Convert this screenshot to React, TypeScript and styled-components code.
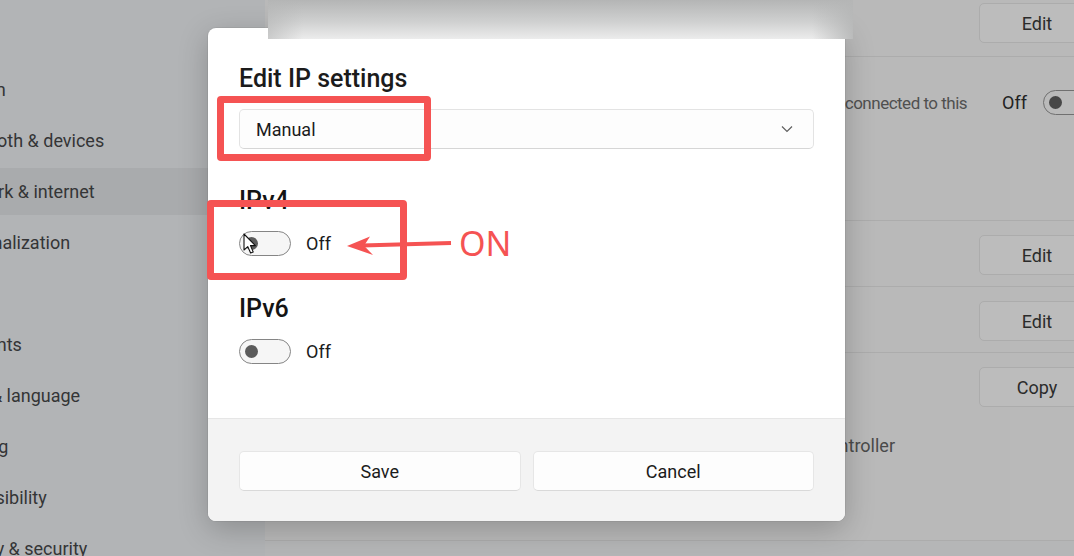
import React from "react";
import styled, { createGlobalStyle } from "styled-components";

const GlobalStyle = createGlobalStyle`
  html, body { margin: 0; padding: 0; }
  body { font-family: Roboto, "Noto Sans", "Liberation Sans", sans-serif; }
  * { box-sizing: border-box; }
`;

const Page = styled.div`
  position: relative;
  width: 1074px;
  height: 556px;
  overflow: hidden;
  display: grid;
  grid-template-columns: 265px 846px;
  background: #b5b6b7;
`;

const Sidebar = styled.nav`
  background: #b2b4b6;
  padding-top: 66px;
  display: flex;
  flex-direction: column;
  gap: 4px;
`;

const NavItem = styled.div<{ $active?: boolean }>`
  height: 47px;
  margin-left: -54px;
  display: flex;
  align-items: center;
  font-size: 18px;
  color: #343536;
  white-space: nowrap;
  border-radius: 4px;
  background: ${(p) => (p.$active ? "#a9abad" : "transparent")};
`;

const Main = styled.main`
  display: flex;
  flex-direction: column;
`;

const Card = styled.section<{ $h: number; $pt: number }>`
  height: ${(p) => p.$h}px;
  padding: ${(p) => p.$pt}px 16px 0 0;
  background: #b9b9b9;
  border-bottom: 1px solid #acacac;
  display: flex;
  flex-direction: column;
`;

const ActionRow = styled.div`
  display: flex;
  justify-content: flex-end;
  align-items: flex-start;
`;

const BgButton = styled.div`
  width: 116px;
  height: 40px;
  border-radius: 5px;
  background: #bcbcbc;
  border: 1px solid #acacac;
  display: flex;
  align-items: center;
  justify-content: center;
  font-size: 18px;
  color: #2b2b2b;
`;

const Desc = styled.div`
  font-size: 17px;
  letter-spacing: -0.5px;
  line-height: 24px;
  color: #505050;
  white-space: pre;
  margin-right: 35px;
`;

const BgOff = styled.div`
  font-size: 18px;
  line-height: 24px;
  color: #222;
  margin-right: 16px;
`;

const Toggle = styled.div<{ $dim?: boolean }>`
  position: relative;
  flex: none;
  width: 52px;
  height: 25px;
  border-radius: 13px;
  border: 1.5px solid ${(p) => (p.$dim ? "#707070" : "#858585")};
  background: ${(p) => (p.$dim ? "#bababa" : "#f6f6f6")};
  &::after {
    content: "";
    position: absolute;
    left: 4.5px;
    top: 4.5px;
    width: 13px;
    height: 13px;
    border-radius: 50%;
    background: ${(p) => (p.$dim ? "#474747" : "#5c5c5c")};
  }
`;

const PropList = styled.div`
  margin-top: 28px;
  margin-right: 200px;
  text-align: right;
  font-size: 18px;
  line-height: 22px;
  color: #4a4a4a;
  white-space: nowrap;
`;

const Dialog = styled.div`
  position: absolute;
  left: 208px;
  top: 28px;
  width: 637px;
  height: 493px;
  border-radius: 8px;
  background: #ffffff;
  box-shadow: 0 8px 30px rgba(0, 0, 0, 0.22), 0 0 0 1px rgba(0, 0, 0, 0.05);
  display: flex;
  flex-direction: column;
  overflow: hidden;
`;

const Body = styled.div`
  flex: 1;
  padding: 35px 31px 0 31px;
  display: flex;
  flex-direction: column;
`;

const Title = styled.h2`
  margin: 0;
  font-size: 25px;
  line-height: 32px;
  font-weight: 500;
  color: #1b1b1b;
`;

const Select = styled.div`
  margin-top: 14px;
  height: 40px;
  border-radius: 5px;
  border: 1px solid #e3e3e3;
  border-bottom-color: #d6d6d6;
  background: #fdfdfd;
  display: flex;
  align-items: center;
  justify-content: space-between;
  padding: 0 20px 0 16px;
  font-size: 18px;
  color: #1b1b1b;
`;

const Section = styled.div<{ $mt: number }>`
  margin-top: ${(p) => p.$mt}px;
  display: flex;
  flex-direction: column;
  gap: 14px;
`;

const SectionLabel = styled.div`
  font-size: 25px;
  line-height: 32px;
  font-weight: 500;
  color: #141414;
`;

const ToggleRow = styled.div`
  display: flex;
  align-items: center;
  gap: 15px;
`;

const OffText = styled.span`
  font-size: 18px;
  color: #1b1b1b;
`;

const Footer = styled.div`
  height: 103px;
  background: #f3f3f3;
  border-top: 1px solid #e6e6e6;
  padding: 32px 31px 0 31px;
  display: grid;
  grid-template-columns: 1fr 1fr;
  gap: 12px;
  align-items: start;
`;

const DlgButton = styled.div`
  height: 40px;
  border-radius: 5px;
  background: #fdfdfd;
  border: 1px solid #e6e6e6;
  border-bottom-color: #d9d9d9;
  display: flex;
  align-items: center;
  justify-content: center;
  font-size: 18px;
  color: #1b1b1b;
`;

const TopStrip = styled.div`
  position: absolute;
  left: 268px;
  top: 0;
  width: 585px;
  height: 39px;
  background: linear-gradient(to right, rgba(181, 182, 182, 0.6), rgba(181, 182, 182, 0) 6%, rgba(181, 182, 182, 0) 93%, rgba(181, 182, 182, 0.9)),
    linear-gradient(to bottom, #b4b5b5, #cfd0d0 55%, #ececec);
`;

const Mark = styled.div<{ $x: number; $y: number; $w: number; $h: number }>`
  position: absolute;
  left: ${(p) => p.$x}px;
  top: ${(p) => p.$y}px;
  width: ${(p) => p.$w}px;
  height: ${(p) => p.$h}px;
  border: 7.5px solid #f55353;
  border-radius: 4px;
`;

const ArrowSvg = styled.svg`
  position: absolute;
  left: 340px;
  top: 220px;
`;

const OnLabel = styled.div`
  position: absolute;
  left: 459px;
  top: 223px;
  font-size: 34px;
  line-height: 40px;
  color: #f55353;
  font-family: "Noto Sans", Roboto, sans-serif;
`;

const Cursor = styled.svg`
  position: absolute;
  left: 243px;
  top: 233px;
`;

const Chevron = () => (
  <svg width="12" height="8" viewBox="0 0 12 8">
    <path d="M1 1.5 L6 6.5 L11 1.5" fill="none" stroke="#5f5f5f" strokeWidth="1.2" />
  </svg>
);

const nav = [
  "System",
  "Bluetooth & devices",
  "Network & internet",
  "Personalization",
  "Apps",
  "Accounts",
  "Time & language",
  "Gaming",
  "Accessibility",
  "Privacy & security",
  "Windows Update",
];

export default function App() {
  return (
    <>
      <GlobalStyle />
      <Page>
        <Sidebar>
          {nav.map((n) => (
            <NavItem key={n} $active={n === "Network & internet"}>
              {n}
            </NavItem>
          ))}
        </Sidebar>
        <Main>
          <Card $h={57} $pt={3}>
            <ActionRow>
              <BgButton>Edit</BgButton>
            </ActionRow>
          </Card>
          <Card $h={164} $pt={34}>
            <ActionRow>
              <Desc>{"Some apps might work differently to reduce data usage when you're connected to this\nnetwork"}</Desc>
              <BgOff>Off</BgOff>
              <Toggle $dim style={{ marginTop: -1 }} />
            </ActionRow>
          </Card>
          <Card $h={66} $pt={14}>
            <ActionRow>
              <BgButton>Edit</BgButton>
            </ActionRow>
          </Card>
          <Card $h={66} $pt={14}>
            <ActionRow>
              <BgButton>Edit</BgButton>
            </ActionRow>
          </Card>
          <Card $h={188} $pt={14}>
            <ActionRow>
              <BgButton>Copy</BgButton>
            </ActionRow>
            <PropList>Description: Realtek PCIe GbE Family Controller</PropList>
          </Card>
        </Main>

        <Dialog>
          <Body>
            <Title>Edit IP settings</Title>
            <Select>
              <span>Manual</span>
              <Chevron />
            </Select>
            <Section $mt={36}>
              <SectionLabel>IPv4</SectionLabel>
              <ToggleRow>
                <Toggle />
                <OffText>Off</OffText>
              </ToggleRow>
            </Section>
            <Section $mt={37}>
              <SectionLabel>IPv6</SectionLabel>
              <ToggleRow>
                <Toggle />
                <OffText>Off</OffText>
              </ToggleRow>
            </Section>
          </Body>
          <Footer>
            <DlgButton>Save</DlgButton>
            <DlgButton>Cancel</DlgButton>
          </Footer>
        </Dialog>

        <TopStrip />

        <Mark $x={217} $y={96} $w={214} $h={65} />
        <Mark $x={207} $y={200} $w={200} $h={80} />

        <ArrowSvg width="120" height="45" viewBox="0 0 120 45">
          <line x1="22" y1="25.5" x2="111" y2="23" stroke="#f55353" strokeWidth="4" />
          <path d="M7 26 L30 16.5 L24 25.8 L33 35 Z" fill="#f55353" />
        </ArrowSvg>
        <OnLabel>ON</OnLabel>

        <Cursor width="14" height="22" viewBox="0 0 14 22">
          <path
            d="M1 1 L1 17 L4.8 13.6 L7.6 20 L10.2 18.9 L7.5 12.6 L12.4 12.6 Z"
            fill="#ffffff"
            stroke="#111111"
            strokeWidth="1.1"
            strokeLinejoin="round"
          />
        </Cursor>
      </Page>
    </>
  );
}
